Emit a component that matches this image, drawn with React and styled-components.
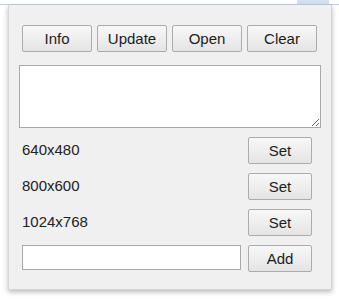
import styled, { createGlobalStyle } from "styled-components"

const Global = createGlobalStyle`
    body {
        margin: 0;
        background: #ffffff;
        font-family: "Liberation Sans", Arial, sans-serif;
    }
`

const sizes = ["640x480", "800x600", "1024x768"]

export default function App() {
    return (
        <Page>
            <Global />
            <BrowserBar>
                <Tab />
            </BrowserBar>
            <Popup>
                <Toolbar>
                    <Botao>Info</Botao>
                    <Botao>Update</Botao>
                    <Botao>Open</Botao>
                    <Botao>Clear</Botao>
                </Toolbar>
                <Caixa />
                <Lista>
                    {sizes.map((s) => (
                        <Linha key={s}>
                            <Rotulo>{s}</Rotulo>
                            <Botao small>Set</Botao>
                        </Linha>
                    ))}
                    <Linha>
                        <Campo type="text" />
                        <Botao small>Add</Botao>
                    </Linha>
                </Lista>
            </Popup>
        </Page>
    )
}

const Page = styled.div`
    width: 339px;
    height: 300px;
    position: relative;
    overflow: hidden;
`

const BrowserBar = styled.div`
    height: 4px;
    border-bottom: 1px solid #c3cfdc;
    background: #ffffff;
    display: flex;
    justify-content: flex-end;
`

const Tab = styled.div`
    width: 32px;
    height: 4px;
    margin-right: 10px;
    background: #d5e1ee;
`

const Popup = styled.div`
    position: absolute;
    top: 5px;
    left: 8px;
    width: 322px;
    height: 284px;
    background: #f0f0f0;
    border: 1px solid #d4d4d4;
    border-top: none;
    box-shadow: 0 2px 5px rgba(0, 0, 0, 0.28);
    display: flex;
    flex-direction: column;
`

const Toolbar = styled.div`
    display: flex;
    gap: 5px;
    margin: 20px 0 0 13px;
`

const Botao = styled.button`
    width: ${props => props.small ? '64px' : '70px'};
    height: 27px;
    padding: 0;
    font-family: "Liberation Sans", Arial, sans-serif;
    font-size: 15px;
    color: #1c1c1c;
    background: linear-gradient(#f8f8f8, #e4e4e4);
    border: 1px solid #acacac;
    border-radius: 2px;
    flex-shrink: 0;
`

const Caixa = styled.textarea`
    box-sizing: border-box;
    width: 302px;
    height: 63px;
    margin: 13px 0 0 10px;
    border: 1px solid #a9a9a9;
    border-radius: 0;
    background: #ffffff;
    padding: 2px;
    font-family: "Liberation Sans", Arial, sans-serif;
    font-size: 13px;
`

const Lista = styled.div`
    display: flex;
    flex-direction: column;
    gap: 9px;
    margin: 9px 0 0 13px;
    width: 290px;
`

const Linha = styled.div`
    display: flex;
    justify-content: space-between;
    align-items: center;
`

const Rotulo = styled.span`
    font-size: 15px;
    color: #222222;
    padding-bottom: 2px;
`

const Campo = styled.input`
    box-sizing: border-box;
    width: 219px;
    height: 25px;
    margin-top: -2px;
    border: 1px solid #a9a9a9;
    border-radius: 0;
    background: #ffffff;
    font-family: "Liberation Sans", Arial, sans-serif;
    font-size: 14px;
`
